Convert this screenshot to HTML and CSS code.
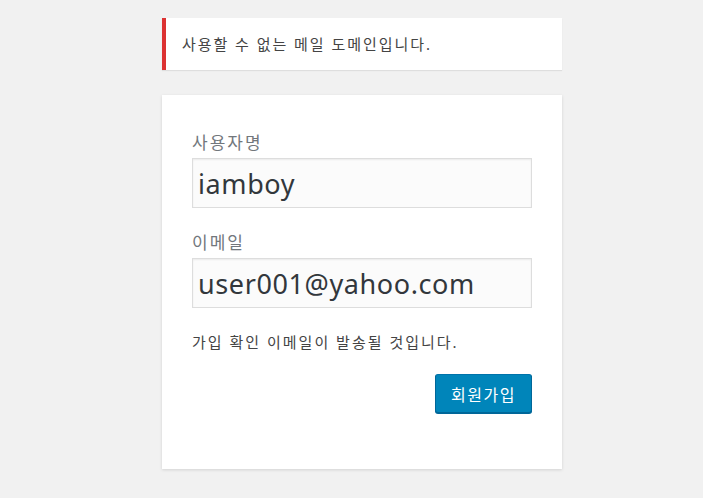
FILE: index.html
```html
<!DOCTYPE html>
<html lang="ko">
<head>
<meta charset="utf-8">
<link rel="stylesheet" href="styles.css">
</head>
<body>
<div class="login">
  <div class="notice">사용할 수 없는 메일 도메인입니다.</div>
  <form class="card">
    <label class="lbl" for="u">사용자명</label>
    <input class="field" id="u" type="text" value="iamboy">
    <label class="lbl" for="e">이메일</label>
    <input class="field" id="e" type="text" value="user001@yahoo.com">
    <p class="msg">가입 확인 이메일이 발송될 것입니다.</p>
    <div class="actions"><button class="btn" type="button">회원가입</button></div>
  </form>
</div>
</body>
</html>
```
FILE: styles.css
```css
html, body { margin: 0; padding: 0; }
body {
  background: #f1f1f1;
  font-family: "Noto Sans", "Noto Sans CJK KR", sans-serif;
  color: #444;
  width: 703px;
  height: 498px;
  overflow: hidden;
}
.login {
  width: 400px;
  margin: 18px 0 0 162px;
}
.notice {
  background: #fff;
  border-left: 4px solid #dc3232;
  box-shadow: 0 1px 1px rgba(0,0,0,.08);
  padding: 12px 12px 12px 16px;
  font-size: 15px;
  letter-spacing: 1.95px;
  line-height: 28px;
  color: #444;
  margin-bottom: 25px;
}
.card {
  background: #fff;
  box-shadow: 0 1px 3px rgba(0,0,0,.13);
  padding: 36px 30px 56px;
  display: flex;
  flex-direction: column;
}
.lbl {
  font-size: 17px;
  letter-spacing: 2px;
  line-height: 24px;
  color: #72777c;
}
.field {
  box-sizing: border-box;
  height: 50px;
  margin: 3px 0 23px;
  border: 1px solid #ddd;
  background: #fbfbfb;
  box-shadow: inset 0 1px 2px rgba(0,0,0,.07);
  font-family: "Noto Sans", sans-serif;
  font-size: 27px;
  letter-spacing: 0.6px;
  color: #32373c;
  padding: 3px 5px;
  outline: none;
}
.msg {
  margin: -1px 0 0;
  font-size: 15px;
  letter-spacing: 2px;
  line-height: 24px;
  color: #444;
}
.actions {
  display: flex;
  justify-content: flex-end;
  margin-top: 20px;
}
.btn {
  box-sizing: border-box;
  width: 97px;
  height: 39px;
  background: #0085ba;
  border: 1px solid;
  border-color: #0073aa #006799 #006799;
  border-radius: 3px;
  box-shadow: 0 1px 0 #006799;
  color: #fff;
  font-family: "Noto Sans CJK KR", sans-serif;
  font-size: 16px;
  letter-spacing: 1.5px;
  padding: 0;
}
```
